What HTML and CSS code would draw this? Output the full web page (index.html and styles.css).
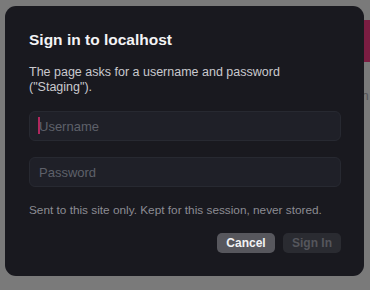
FILE: index.html
```html
<!DOCTYPE html>
<html lang="en">
<head>
<meta charset="utf-8">
<title>Sign in to localhost</title>
<link rel="stylesheet" href="styles.css">
</head>
<body>
<div class="backdrop">
  <div class="banner"></div>
  <p class="behind-text">th</p>
</div>
<div class="dialog" role="dialog" aria-labelledby="dlg-title">
  <h1 class="title" id="dlg-title">Sign in to localhost</h1>
  <p class="desc">The page asks for a username and password ("Staging").</p>
  <div class="field">
    <input class="input" type="text" placeholder="Username">
    <span class="caret"></span>
  </div>
  <div class="field field-second">
    <input class="input" type="password" placeholder="Password">
  </div>
  <p class="note">Sent to this site only. Kept for this session, never stored.</p>
  <div class="actions">
    <button class="btn btn-cancel" type="button">Cancel</button>
    <button class="btn btn-primary" type="button" disabled>Sign In</button>
  </div>
</div>
</body>
</html>
```
FILE: styles.css
```css
* { box-sizing: border-box; }
html, body {
  margin: 0;
  padding: 0;
  width: 370px;
  height: 290px;
  overflow: hidden;
  background: #7a7a7a;
  font-family: "Liberation Sans", Arial, sans-serif;
}
.backdrop {
  padding-top: 20px;
}
.banner {
  height: 42px;
  margin-left: 340px;
  background: #7b1d42;
}
.behind-text {
  margin: 26px 0 0 0;
  padding-left: 358px;
  font-size: 13px;
  line-height: 16px;
  color: #555558;
  white-space: nowrap;
}
.dialog {
  position: absolute;
  left: 5px;
  top: 6px;
  width: 359px;
  height: 270px;
  padding: 24px 23px 0 24px;
  background: #19191f;
  border-radius: 11px;
  display: flex;
  flex-direction: column;
}
.title {
  margin: 0;
  font-size: 15.5px;
  line-height: 20px;
  font-weight: 700;
  color: #f3f3f5;
}
.desc {
  margin: 15px 0 0 0;
  font-size: 12.5px;
  line-height: 15px;
  color: #c9c9ce;
}
.field {
  position: relative;
  margin-top: 16px;
}
.input {
  display: block;
  width: 100%;
  height: 30px;
  margin: 0;
  padding: 0 9px;
  border: 1px solid #272931;
  border-radius: 6px;
  background: #1f2028;
  color: #e0e0e4;
  font-family: "Liberation Sans", Arial, sans-serif;
  font-size: 13px;
  outline: none;
}
.input::placeholder {
  color: #5e606a;
}
.caret {
  position: absolute;
  left: 9px;
  top: 6px;
  width: 2px;
  height: 17px;
  background: #b0275e;
}
.note {
  margin: 16px 0 0 0;
  font-size: 11.8px;
  line-height: 15px;
  color: #8c8c93;
}
.actions {
  margin-top: 15px;
  display: flex;
  justify-content: flex-end;
  gap: 8px;
}
.btn {
  width: 58px;
  height: 20px;
  padding: 0;
  border: none;
  border-radius: 5px;
  font-family: "Liberation Sans", Arial, sans-serif;
  font-size: 12px;
  font-weight: 700;
  line-height: 20px;
}
.btn-cancel {
  background: #57575d;
  color: #f2f2f4;
}
.btn-primary {
  background: #2a2b31;
  color: #55565c;
}
```
